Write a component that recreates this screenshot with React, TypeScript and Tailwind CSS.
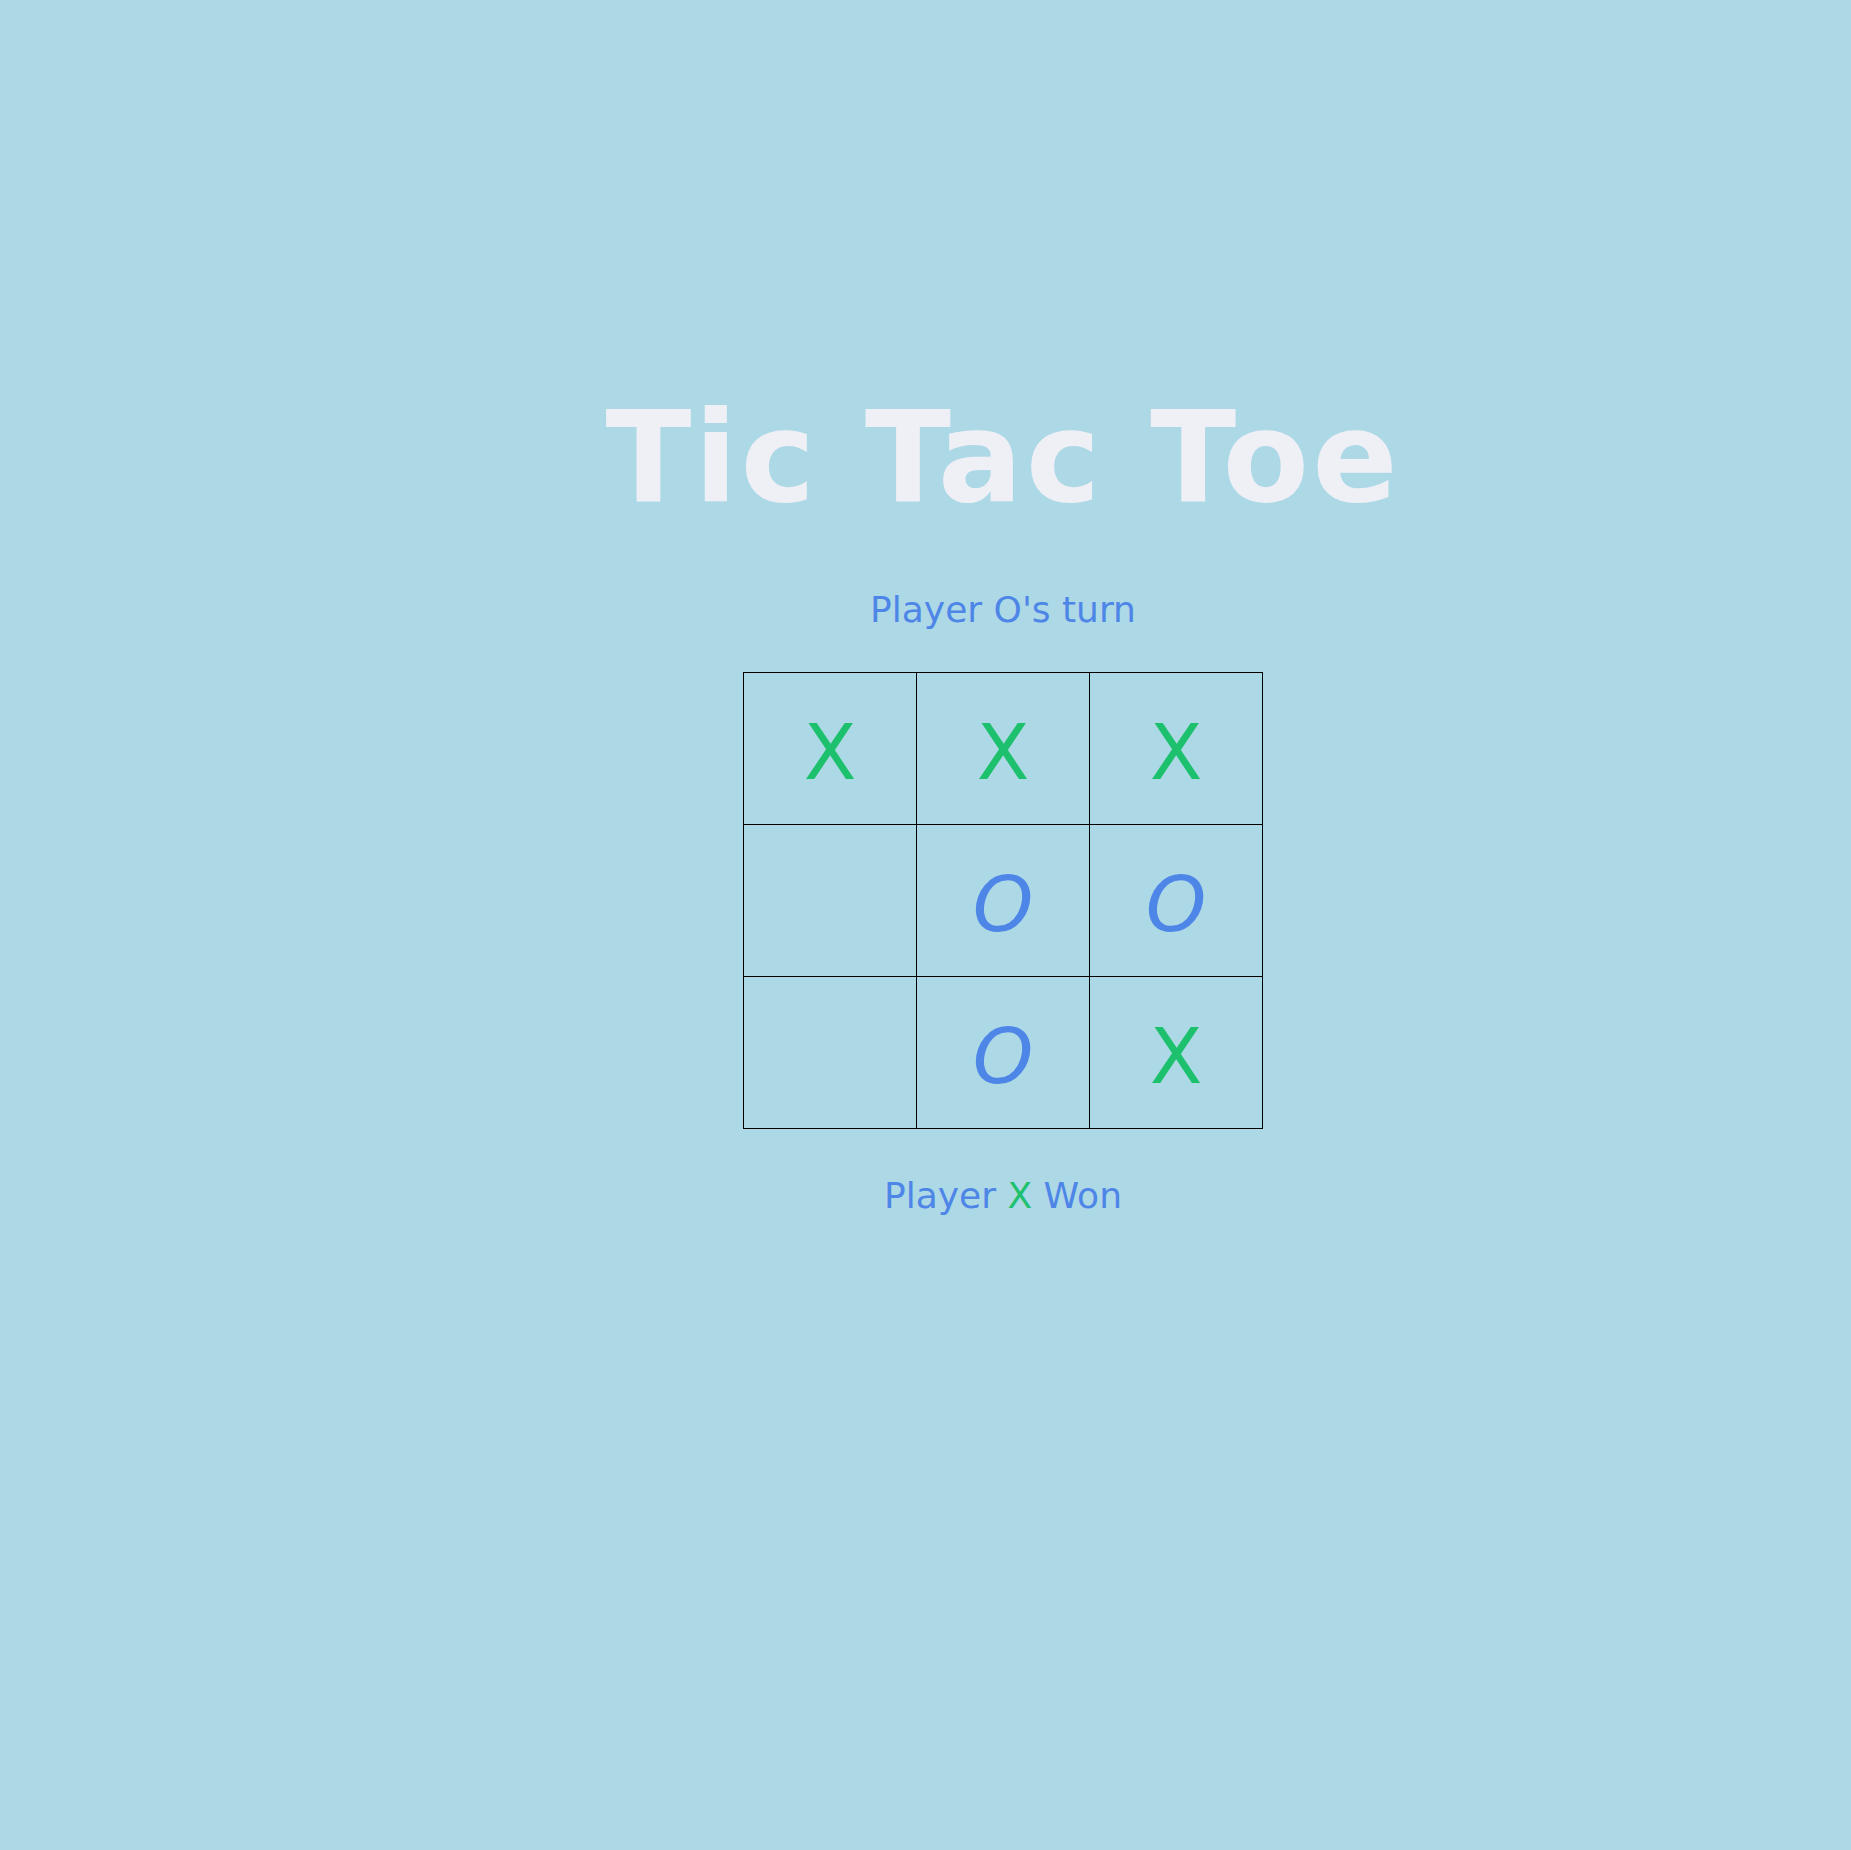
import { useState } from "react";

type Mark = "X" | "O" | null;

const initialBoard: Mark[] = ["X", "X", "X", null, "O", "O", null, "O", "X"];

const font = { fontFamily: '"Comic Sans MS", "DejaVu Sans", sans-serif' };

export default function App() {
  const [board] = useState<Mark[]>(initialBoard);
  const turn: Mark = "O";
  const winner: Mark = "X";

  return (
    <div
      className="flex min-h-[1850px] w-full flex-col items-center bg-[#add8e6] pl-[155px] pt-[395px]"
      style={font}
    >
      {/* Title */}
      <h1 className="text-[126px] font-bold leading-none tracking-[3px] text-[#eef0f5]">
        Tic Tac Toe
      </h1>

      <p className="mt-[69px] text-[36px] leading-[40px] text-[#4e86e8]">
        Player {turn}'s turn
      </p>

      {/* Board */}
      <div className="mt-[42px] grid grid-cols-3 border-l border-t border-black">
        {board.map((cell, i) => (
          <div
            key={i}
            className="flex h-[152px] w-[173px] items-center justify-center border-b border-r border-black pt-[8px]"
          >
            {cell && (
              <span
                className={
                  cell === "X"
                    ? "text-[77px] leading-none text-[#1dc16d]"
                    : "text-[77px] italic leading-none text-[#4e86e8]"
                }
              >
                {cell}
              </span>
            )}
          </div>
        ))}
      </div>

      <p className="mt-[47px] text-[36px] leading-[40px] text-[#4e86e8]">
        Player <span className="text-[#1dc16d]">{winner}</span> Won
      </p>
    </div>
  );
}
